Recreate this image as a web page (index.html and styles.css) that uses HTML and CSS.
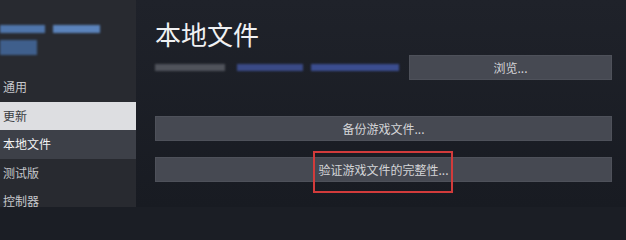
FILE: index.html
```html
<!DOCTYPE html>
<html lang="zh-CN">
<head>
<meta charset="utf-8">
<title>本地文件</title>
<link rel="stylesheet" href="styles.css">
</head>
<body>
<div class="app">
  <aside class="sidebar">
    <div class="game-title">
      <div class="blur-row row1">
        <span class="blur b1"></span>
        <span class="blur b2"></span>
      </div>
      <div class="blur-row row2">
        <span class="blur b3"></span>
      </div>
    </div>
    <nav class="nav">
      <div class="nav-item">通用</div>
      <div class="nav-item hover">更新</div>
      <div class="nav-item active">本地文件</div>
      <div class="nav-item">测试版</div>
      <div class="nav-item">控制器</div>
    </nav>
  </aside>
  <main class="content">
    <h1 class="title">本地文件</h1>
    <div class="path-row">
      <div class="path">
        <span class="pblur p1"></span>
        <span class="pblur p2"></span>
        <span class="pblur p3"></span>
      </div>
      <button class="btn browse">浏览...</button>
    </div>
    <button class="btn wide backup">备份游戏文件...</button>
    <div class="verify-wrap">
      <button class="btn wide verify">验证游戏文件的完整性...</button>
      <span class="highlight"></span>
    </div>
  </main>
</div>
</body>
</html>
```
FILE: styles.css
```css
html, body {
  margin: 0;
  padding: 0;
  height: 100%;
  overflow: hidden;
}
body {
  background: #1b1e25;
  font-family: "Noto Sans CJK SC", "Noto Sans", sans-serif;
}
.app {
  display: flex;
  width: 626px;
  height: 207px;
  overflow: hidden;
}
.sidebar {
  width: 136px;
  flex: none;
  background: #282a30;
  display: flex;
  flex-direction: column;
}
.game-title {
  height: 73px;
  flex: none;
  display: flex;
  flex-direction: column;
  padding-top: 25px;
  box-sizing: border-box;
  gap: 7px;
}
.blur-row {
  display: flex;
  gap: 8px;
}
.blur {
  display: block;
  background: #4f75aa;
  filter: blur(1.2px);
}
.b1 { width: 45px; height: 8px; }
.b2 { width: 47px; height: 8px; background: #5b83bb; }
.b3 { width: 37px; height: 15px; background: #3f5f8c; }
.nav {
  display: flex;
  flex-direction: column;
  flex: none;
}
.nav-item {
  flex: none;
  height: 28.5px;
  line-height: 28.5px;
  padding-left: 3px;
  font-size: 12px;
  color: #c6c8cc;
  white-space: nowrap;
}
.nav-item.hover {
  background: #dddee1;
  color: #3a3c42;
}
.nav-item.active {
  background: #3d4048;
  color: #f2f3f5;
}
.content {
  flex: 1;
  padding: 0 14px 0 19px;
  background: linear-gradient(180deg, #1f222a 0%, #181b22 100%);
  display: flex;
  flex-direction: column;
}
.title {
  margin: 18px 0 0 0;
  font-size: 26px;
  font-weight: 400;
  line-height: 32px;
  color: #f0f1f3;
  height: 32px;
  flex: none;
}
.path-row {
  display: flex;
  align-items: center;
  margin-top: 5px;
  height: 25px;
  flex: none;
}
.path {
  flex: 1;
  display: flex;
  align-items: center;
  gap: 8px;
}
.pblur {
  display: block;
  height: 7px;
  filter: blur(1.2px);
}
.p1 { width: 70px; background: #50535b; margin-right: 4px; }
.p2 { width: 66px; background: #3a4a86; }
.p3 { width: 88px; background: #3b4d8f; }
.btn {
  font-family: "Noto Sans CJK SC", "Noto Sans", sans-serif;
  font-size: 12px;
  color: #d4d5d8;
  background: #464952;
  border: 1px solid #4e515a;
  height: 25px;
  padding: 0;
  box-sizing: border-box;
  line-height: 23px;
  text-align: center;
  flex: none;
}
.browse {
  width: 203px;
}
.wide {
  width: 100%;
  display: block;
}
.backup {
  margin-top: 36px;
}
.verify-wrap {
  position: relative;
  margin-top: 16px;
  flex: none;
}
.highlight {
  position: absolute;
  left: 158px;
  top: -6px;
  width: 140px;
  height: 42px;
  box-sizing: border-box;
  border: 2px solid #d23b3b;
}
```
